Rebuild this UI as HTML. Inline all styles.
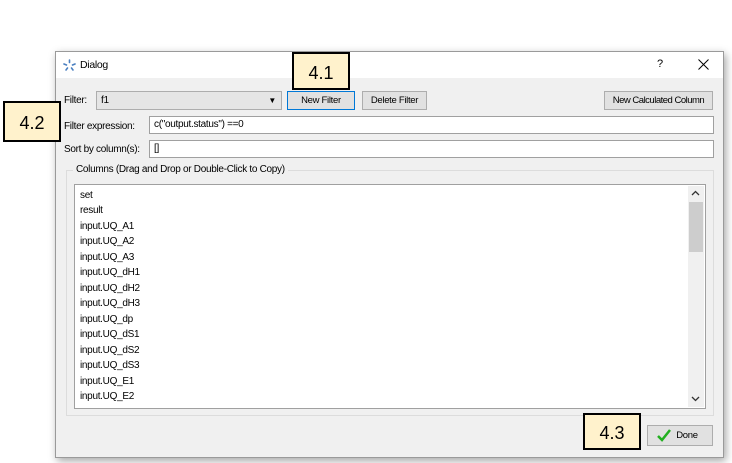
<!DOCTYPE html>
<html><head><style>
*{box-sizing:border-box;margin:0;padding:0}
body{width:732px;height:463px;background:#fff;position:relative;overflow:hidden;font-family:"Liberation Sans",sans-serif;font-size:10px;letter-spacing:-0.3px;color:#000;white-space:nowrap}
.a{position:absolute}
.dlg{left:55px;top:51px;width:669px;height:407px;background:#f0f0f0;border:1px solid #9a9a9a;box-shadow:2px 3px 8px rgba(0,0,0,.35)}
.title{left:55px;top:51px;width:669px;height:27px;background:#fff;border:1px solid #9a9a9a;border-bottom:none}
.btn{background:#e1e1e1;border:1px solid #adadad;text-align:center;line-height:17px;font-size:9.5px}
.inp{background:#fff;border:1px solid #a0a0a0;padding-left:4px;line-height:16px}
.call{background:#fff2cc;border:2px solid #000;font-size:18px;text-align:center;letter-spacing:0}
.item{left:80px;font-size:10px}
</style></head><body>
<div class="a dlg"></div>
<div class="a title"></div>
<svg class="a" style="left:63px;top:59px" width="13" height="13" viewBox="0 0 13 13"><g stroke="#4a7fc0" stroke-width="1.6" stroke-linecap="round"><line x1="6.5" y1="1" x2="6.5" y2="3.5"/><line x1="1" y1="5" x2="3.5" y2="6"/><line x1="12" y1="5" x2="9.5" y2="6"/><line x1="3" y1="11" x2="4.5" y2="9"/><line x1="10" y1="11" x2="8.5" y2="9"/></g></svg>
<div class="a" style="left:80px;top:59px;font-size:10.5px">Dialog</div>
<div class="a" style="left:657px;top:58px;font-size:11px">?</div>
<svg class="a" style="left:698px;top:59px" width="11" height="11" viewBox="0 0 11 11"><path d="M0.5 0.5 L10.5 10.5 M10.5 0.5 L0.5 10.5" stroke="#000" stroke-width="1"/></svg>

<div class="a" style="left:64px;top:95px">Filter:</div>
<div class="a" style="left:96px;top:91px;width:186px;height:19px;background:#e5e5e5;border:1px solid #adadad;padding-left:4px;line-height:17px">f1<span class="a" style="right:5px;top:0;font-size:8px">▼</span></div>
<div class="a btn" style="left:287px;top:91px;width:68px;height:19px;border:1px solid #0078d7">New Filter</div>
<div class="a btn" style="left:362px;top:91px;width:65px;height:19px">Delete Filter</div>
<div class="a btn" style="left:604px;top:91px;width:109px;height:19px;letter-spacing:-0.5px">New Calculated Column</div>

<div class="a" style="left:64px;top:121px">Filter expression:</div>
<div class="a inp" style="left:149px;top:116px;width:565px;height:18px">c("output.status") ==0</div>
<div class="a" style="left:64px;top:144px">Sort by column(s):</div>
<div class="a inp" style="left:149px;top:140px;width:565px;height:18px">[]</div>

<div class="a" style="left:66px;top:170px;width:648px;height:246px;border:1px solid #dcdcdc"></div>
<div class="a" style="left:73px;top:164px;background:#f0f0f0;padding:0 3px">Columns (Drag and Drop or Double-Click to Copy)</div>
<div class="a" style="left:74px;top:184px;width:632px;height:225px;background:#fff;border:1px solid #a0a0a0"></div>
<div class="a" style="left:688px;top:186px;width:16px;height:221px;background:#f0f0f0"></div>
<div class="a" style="left:689px;top:202px;width:14px;height:50px;background:#cdcdcd"></div>
<svg class="a" style="left:691px;top:190px" width="9" height="6" viewBox="0 0 9 6"><path d="M1 5 L4.5 1.5 L8 5" stroke="#333" stroke-width="1.3" fill="none"/></svg>
<svg class="a" style="left:691px;top:396px" width="9" height="6" viewBox="0 0 9 6"><path d="M1 1 L4.5 4.5 L8 1" stroke="#333" stroke-width="1.3" fill="none"/></svg>
<div class="a item" style="top:190px">set</div>
<div class="a item" style="top:205px">result</div>
<div class="a item" style="top:221px">input.UQ_A1</div>
<div class="a item" style="top:236px">input.UQ_A2</div>
<div class="a item" style="top:252px">input.UQ_A3</div>
<div class="a item" style="top:267px">input.UQ_dH1</div>
<div class="a item" style="top:283px">input.UQ_dH2</div>
<div class="a item" style="top:298px">input.UQ_dH3</div>
<div class="a item" style="top:314px">input.UQ_dp</div>
<div class="a item" style="top:329px">input.UQ_dS1</div>
<div class="a item" style="top:345px">input.UQ_dS2</div>
<div class="a item" style="top:360px">input.UQ_dS3</div>
<div class="a item" style="top:376px">input.UQ_E1</div>
<div class="a item" style="top:391px">input.UQ_E2</div>

<div class="a btn" style="left:647px;top:425px;width:66px;height:21px;line-height:19px;padding-left:14px">Done</div>
<svg class="a" style="left:657px;top:428px" width="14" height="14" viewBox="0 0 14 14"><path d="M1 8 L5 12 L13 2" stroke="#22b020" stroke-width="2.5" fill="none"/></svg>

<div class="a call" style="left:292px;top:52px;width:58px;height:38px;line-height:38px">4.1</div>
<div class="a call" style="left:3px;top:101px;width:58px;height:41px;line-height:41px">4.2</div>
<div class="a call" style="left:583px;top:413px;width:58px;height:37px;line-height:37px">4.3</div>
</body></html>
